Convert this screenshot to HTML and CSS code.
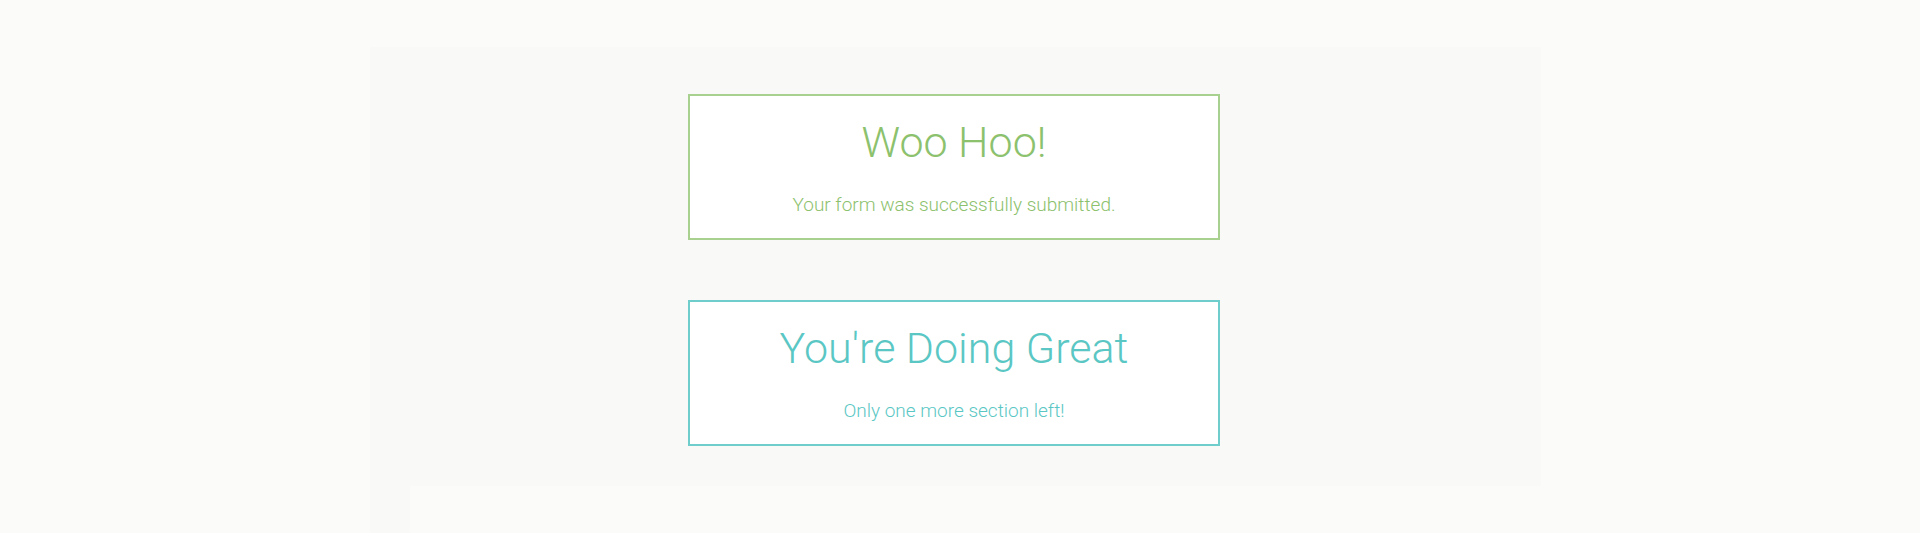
FILE: index.html
```html
<!DOCTYPE html>
<html>
<head>
<meta charset="utf-8">
<link rel="stylesheet" href="styles.css">
</head>
<body>
<div class="page">
  <section class="panel">
    <div class="notice notice-success">
      <h2 class="notice-title">Woo Hoo!</h2>
      <p class="notice-text">Your form was successfully submitted.</p>
    </div>
    <div class="notice notice-info">
      <h2 class="notice-title">You're Doing Great</h2>
      <p class="notice-text">Only one more section left!</p>
    </div>
  </section>
  <div class="panel-tail">
    <div class="next-card"></div>
  </div>
</div>
</body>
</html>
```

FILE: styles.css
```css
html, body {
  margin: 0;
  padding: 0;
  background: #fbfbf9;
  font-family: Roboto, "Liberation Sans", sans-serif;
}
.page {
  padding-top: 47px;
  height: 486px;
  overflow: hidden;
}
.panel {
  margin-left: 370px;
  width: 1171px;
  box-sizing: border-box;
  background: #f9f9f7;
  padding: 47px 3px 40px 0;
  display: flex;
  flex-direction: column;
  align-items: center;
  gap: 60px;
}
.notice {
  width: 532px;
  height: 146px;
  box-sizing: border-box;
  background: #ffffff;
  border: 2px solid;
  text-align: center;
  display: flex;
  flex-direction: column;
  align-items: center;
}
.notice-title {
  margin: 0;
  padding-top: 20px;
  font-weight: 300;
  font-size: 43px;
  line-height: 52px;
}
.notice-text {
  margin: 0;
  padding-top: 26px;
  font-weight: 300;
  font-size: 19px;
  line-height: 22px;
}
.notice-success {
  border-color: #a8d08f;
  color: #8cc16d;
}
.notice-info {
  border-color: #6fcdcc;
  color: #5bc7c4;
}
.panel-tail {
  margin-left: 370px;
  width: 1211px;
  padding-left: 40px;
  box-sizing: border-box;
  background: #f9f9f7;
}
.next-card {
  height: 60px;
  background: #fbfbf9;
}
```
